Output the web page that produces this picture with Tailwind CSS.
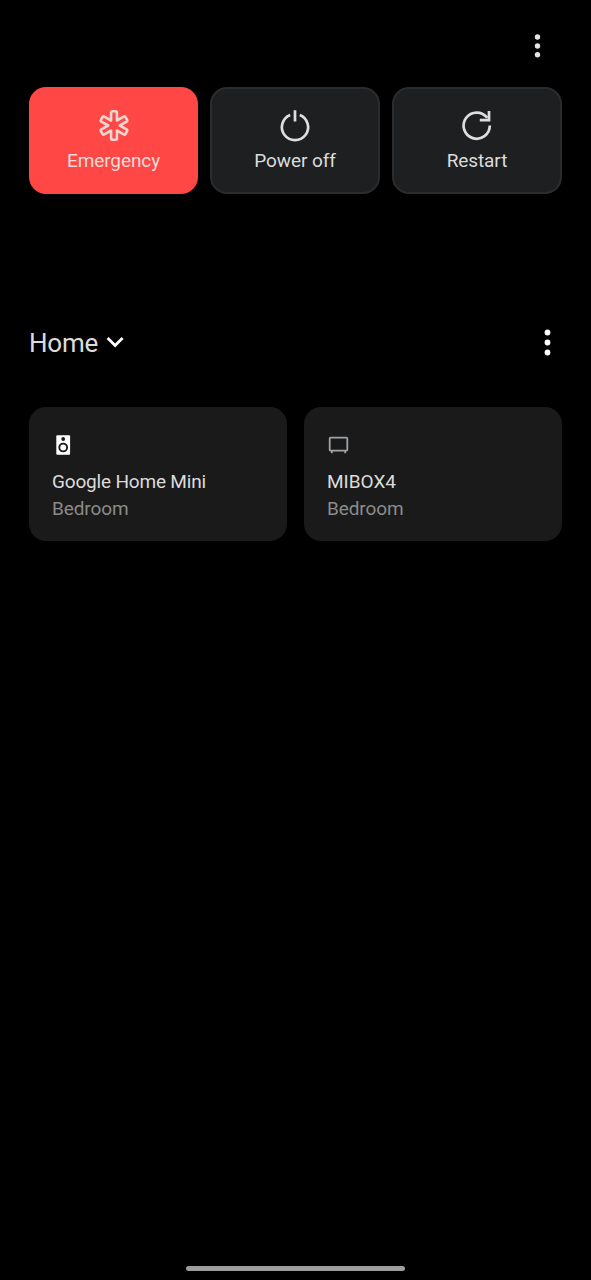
<!DOCTYPE html>
<html lang="en">
<head>
<meta charset="utf-8">
<title>Power menu</title>
<script src="https://cdn.jsdelivr.net/npm/@tailwindcss/browser@4"></script>
</head>
<body class="bg-black">
<main class="flex h-[1280px] w-[591px] flex-col bg-black pr-[29px] pl-[29px] font-['Roboto',sans-serif] text-[#dcdcdc]">
  <header class="flex h-[87px] justify-end pt-[33px] pr-[18px]">
    <svg class="h-[26px] w-[13px]" viewBox="0 0 13 26" fill="#e4e4e4"><circle cx="6.5" cy="4" r="2.7"/><circle cx="6.5" cy="13" r="2.7"/><circle cx="6.5" cy="21.8" r="2.7"/></svg>
  </header>
  <section class="grid h-[107px] grid-cols-[169px_170px_170px] justify-between text-[19px] leading-6 tracking-[-0.1px]">
    <button class="flex flex-col items-center rounded-[17px] bg-[#ff4845] pt-[21px] text-[#f2dbd9]">
      <svg class="h-9 w-9" viewBox="-18 -17.5 36 36" fill="none" stroke="#edd5d2" stroke-width="2.6" stroke-linejoin="round"><path d="M-2.9-5V-13Q-2.9-14.2-1.7-14.2H1.7Q2.9-14.2 2.9-13V-5L9.7-8.9Q10.8-9.5 11.4-8.5L13.1-5.6Q13.7-4.6 12.6-3.9L5.8 0L12.6 3.9Q13.7 4.6 13.1 5.6L11.4 8.5Q10.8 9.5 9.7 8.9L2.9 5V13Q2.9 14.2 1.7 14.2H-1.7Q-2.9 14.2-2.9 13V5L-9.7 8.9Q-10.8 9.5-11.4 8.5L-13.1 5.6Q-13.7 4.6-12.6 3.9L-5.8 0L-12.6-3.9Q-13.7-4.6-13.1-5.6L-11.4-8.5Q-10.8-9.5-9.7-8.9Z"/></svg>
      <span class="mt-[5px]">Emergency</span>
    </button>
    <button class="flex flex-col items-center rounded-[17px] border-2 border-[#2b2c2d] bg-[#1d1f21] pt-[19px]">
      <svg class="h-9 w-9" viewBox="0 0 36 36" fill="none" stroke="#dedede" stroke-width="2.7"><path d="M13.2 6.9A13.1 13.1 0 1 0 22.8 6.9M18 2.2V13.5"/></svg>
      <span class="mt-[5px]">Power off</span>
    </button>
    <button class="flex flex-col items-center rounded-[17px] border-2 border-[#2b2c2d] bg-[#1d1f21] pt-[19px]">
      <svg class="h-9 w-9" viewBox="0 0 36 36" fill="none" stroke="#dedede" stroke-width="2.7"><path d="M30.8 17.6A13.1 13.1 0 1 1 28.2 9.8M30 3V12.1H20.8"/></svg>
      <span class="mt-[5px]">Restart</span>
    </button>
  </section>
  <section class="mt-[132px] flex h-[34px] items-center justify-between">
    <div class="flex items-center">
      <h1 class="text-[26px] leading-[34px] tracking-[-0.2px]">Home</h1>
      <svg class="ml-[8px] h-5 w-5" viewBox="0 0 20 20" fill="none" stroke="#fff" stroke-width="2.8"><path d="M1.6 5L9.1 12.5L16.6 5"/></svg>
    </div>
    <svg class="mr-[8px] h-8 w-[13px]" viewBox="0 0 13 32" fill="#fff"><circle cx="6.5" cy="5.5" r="2.9"/><circle cx="6.5" cy="15.5" r="2.9"/><circle cx="6.5" cy="25.5" r="2.9"/></svg>
  </section>
  <section class="mt-[47px] grid h-[134px] grid-cols-2 gap-[17px] text-[19px] leading-[27px]">
    <article class="flex flex-col items-start rounded-[17px] bg-[#1a1a1a] pt-[26px] pl-[23px]">
      <svg class="h-6 w-6" viewBox="0 0 24 24"><rect x="4.3" y="2.2" width="13.8" height="19.5" rx="1" fill="#fff"/><circle cx="11.2" cy="6" r="1.9" fill="#1a1a1a"/><circle cx="11.2" cy="14.5" r="3.9" fill="none" stroke="#1a1a1a" stroke-width="1.9"/></svg>
      <p class="mt-[11px] tracking-[-0.18px]">Google Home Mini</p>
      <p class="tracking-[-0.1px] text-[#8b8b8b]">Bedroom</p>
    </article>
    <article class="flex flex-col items-start rounded-[17px] bg-[#1a1a1a] pt-[26px] pl-[23px]">
      <svg class="h-6 w-6" viewBox="0 0 24 24" fill="none" stroke="#a0a4a8" stroke-width="1.8"><rect x="2.7" y="4.7" width="17.6" height="12.9" rx="0.8"/><path d="M4.8 18V20.3M18.2 18V20.3"/></svg>
      <p class="mt-[11px]">MIBOX4</p>
      <p class="tracking-[-0.1px] text-[#8b8b8b]">Bedroom</p>
    </article>
  </section>
  <div class="mt-auto mb-[9px] h-[5px] w-[219px] self-center rounded-full bg-[#9d9d9d]"></div>
</main>
</body>
</html>
